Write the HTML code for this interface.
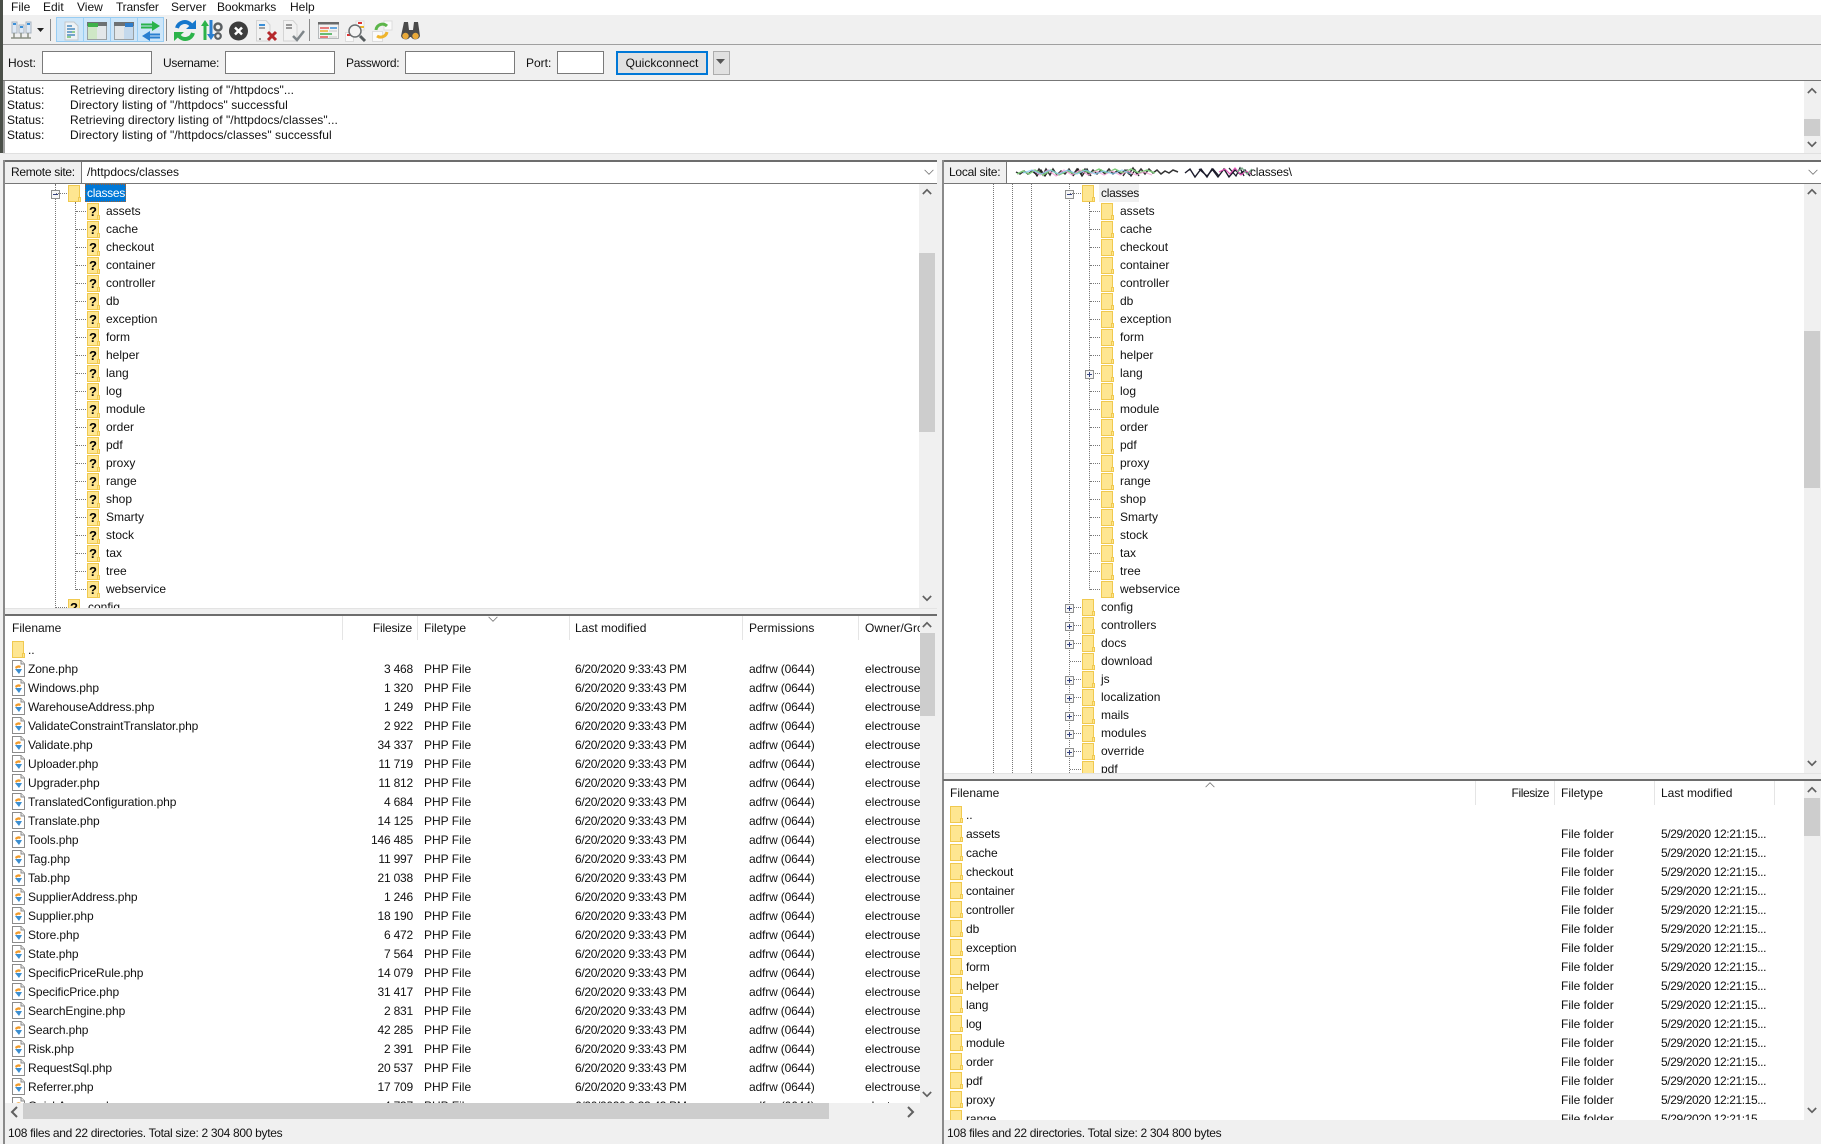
<!DOCTYPE html>
<html lang="en"><head><meta charset="utf-8"><title>FileZilla</title>
<style>
html,body{margin:0;padding:0;width:1821px;height:1144px;overflow:hidden;background:#f0f0f0}
body{position:relative;font:12px/18px "Liberation Sans",Arial,sans-serif;color:#111;filter:blur(.3px)}
.a{position:absolute}
.menu span{position:absolute;top:-2px}
.inp{position:absolute;top:51px;height:21px;background:#fff;border:1px solid #7a7a7a}
.lb{position:absolute;top:54px;letter-spacing:-.3px}
.w{position:absolute;background:#fff;overflow:hidden}
.vl{position:absolute;width:0;border-left:1px dotted #777}
.r{height:18px;position:relative;white-space:nowrap}
.r svg{position:absolute;top:1px;width:13px;height:17px}
.r span{position:absolute;top:0}
.r i{position:absolute;top:9px;height:0;border-top:1px dotted #777}
.r b{position:absolute;top:6px;width:9px;height:9px}
.L .c svg{left:82px}.L .c span{left:101px}.L .c i{left:71px;width:10px}
.L .t svg{left:63px}.L .t span{left:83px}.L .t i{left:51px;width:11px}.L .t b{left:46px}
.R .c svg{left:157px}.R .c span{left:176px}.R .c i{left:146px;width:10px}.R .c b{left:141px}
.R .t svg{left:138px}.R .t span{left:157px}.R .t i{left:126px;width:11px}.R .t b{left:121px}
table{border-collapse:collapse;table-layout:fixed;position:absolute;left:0}
td{padding:0 0 0 7px;height:19px;white-space:nowrap;overflow:hidden;line-height:19px}
td:first-child{letter-spacing:-.1px}
td.n{text-align:right;padding:0 4px 0 0;letter-spacing:-.2px}
.lt td:nth-child(4){letter-spacing:-.33px}
.lt td:nth-child(5){letter-spacing:-.15px}
.rt td:nth-child(4){letter-spacing:-.4px}
td svg{width:13px;height:17px;vertical-align:-4px;margin-right:3px;display:inline-block}
.hd{position:absolute;top:0;height:24px;line-height:24px}
.dv{position:absolute;top:0;width:1px;height:24px;background:#e5e5e5}
.sb{position:absolute;background:#f0f0f0}
.th{position:absolute;background:#cdcdcd}
.ch{position:absolute;width:10px;height:7px;margin-left:1px;fill:none;stroke:#606060;stroke-width:2}
.sm{position:absolute;width:12px;height:7px;fill:none;stroke:#777;stroke-width:1}
.st{letter-spacing:-.31px}
</style></head><body>
<svg width="0" height="0" style="position:absolute"><defs>
<symbol id="f" viewBox="0 0 13 17"><path d="M.5.5H11.5V16.5H.5Z" fill="#fee691" stroke="#f0c94f"/><path d="M10.500 12.500H12.500V16.500H10.500Z" fill="#fee691" stroke="#f0c94f"/></symbol>
<symbol id="q" viewBox="0 0 13 17"><path d="M.5.5H11.500V16.500H.5Z" fill="#fee691" stroke="#f0c94f"/><path d="M10.500 12.500H12.500V16.500H10.500Z" fill="#fee691" stroke="#f0c94f"/><text x="6" y="13" font-family="Liberation Sans" font-size="13" font-weight="700" text-anchor="middle" fill="#000">?</text></symbol>
<symbol id="d" viewBox="0 0 13 17"><path d="M.5.5H9L12.500 4V16.500H.5Z" fill="#fff" stroke="#8b8b8b"/><path d="M9 .5V4H12.500" fill="#e8e8e8" stroke="#8b8b8b"/><path d="M3 7Q6 4 9 6L8 8Q6 7 4 9Z" fill="#f09a2a"/><path d="M3 9H10L7 14Z" fill="#3b8ed0"/></symbol>
<symbol id="p" viewBox="0 0 9 9"><rect x=".5" y=".5" width="8" height="8" fill="#f6f6f6" stroke="#8e8f8f"/><path d="M2 4.500H7M4.500 2V7" stroke="#34427e"/></symbol>
<symbol id="m" viewBox="0 0 9 9"><rect x=".5" y=".5" width="8" height="8" fill="#f6f6f6" stroke="#8e8f8f"/><path d="M2 4.500H7" stroke="#34427e"/></symbol>
<symbol id="up" viewBox="0 0 12 8"><path d="M1 7L6 2L11 7"/></symbol>
<symbol id="dn" viewBox="0 0 12 8"><path d="M1 1L6 6L11 1"/></symbol>
</defs></svg>

<!-- menu -->
<div class="a menu" style="left:0;top:0;width:1821px;height:15px;background:#fff;overflow:hidden">
<span style="left:11px">File</span><span style="left:43px">Edit</span><span style="left:77px">View</span><span style="left:116px;letter-spacing:-.2px">Transfer</span><span style="left:171px">Server</span><span style="left:217px;letter-spacing:-.1px">Bookmarks</span><span style="left:290px">Help</span>
</div>
<div class="a" style="left:0;top:0;width:3px;height:153px;background:#4a4f48"></div>

<!-- toolbar -->
<svg class="a" style="left:3px;top:0" width="440" height="45" viewBox="3 0 440 45">
<g><rect x="12" y="22" width="5" height="11" fill="#dfe9f4" stroke="#a9b4c0"/><rect x="19" y="25" width="5" height="8" fill="#dfe9f4" stroke="#a9b4c0"/><rect x="26" y="22" width="5" height="11" fill="#dfe9f4" stroke="#a9b4c0"/><path d="M13 24h3M20 27h3M27 24h3" stroke="#3a8fd8" stroke-width="2"/><path d="M11 38H31M14 33V38M21 33V38M28 33V38" stroke="#8a8f84" stroke-width="1.500" fill="none"/></g>
<path d="M37 28H44L40.500 32Z" fill="#222"/>
<path d="M50.500 19V41" stroke="#8a8a8a"/>
<rect x="56.500" y="17.500" width="107" height="24" fill="#cde6f9" stroke="#99cdf3"/>
<path d="M83.500 18V41M110.500 18V41M137.500 18V41" stroke="#99cdf3"/>
<path d="M65 22H74L78 26V40H65Z" fill="#eef2f5" stroke="#c2c8cc"/><path d="M67 26H72M67 29H75M67 32H72M67 35H75" stroke="#4b8bbf" stroke-width="1.500"/><path d="M72 32h3M67 37h4" stroke="#6fbf6f" stroke-width="1.500"/>
<rect x="87.500" y="22.500" width="19" height="17" fill="#e3e7e9" stroke="#9aa0a2"/><rect x="87" y="22" width="20" height="4" fill="#6d7173"/><rect x="88" y="23" width="10" height="4" fill="#3fb14a"/><rect x="88" y="27" width="9" height="12" fill="#cfe7c6"/>
<rect x="114.500" y="22.500" width="19" height="17" fill="#e3e7e9" stroke="#9aa0a2"/><rect x="114" y="22" width="20" height="4" fill="#6d7173"/><rect x="125" y="23" width="8" height="4" fill="#2f7ecb"/><rect x="124" y="27" width="9" height="12" fill="#c4d9ec"/>
<path d="M141 24.500H155M141 27.500H155" stroke="#29b34b" stroke-width="2"/><path d="M152 21L160 26L152 31Z" fill="#29b34b"/><path d="M146 34.500H160M146 37.500H160" stroke="#2a7fd0" stroke-width="2"/><path d="M150 31L142 36L150 41Z" fill="#2a7fd0"/>
<path d="M166.500 19V41" stroke="#8a8a8a"/>
<path d="M177 28A8 8 0 0 1 191 25" fill="none" stroke="#1677cc" stroke-width="4"/><path d="M186 29H196V20Z" fill="#1677cc"/>
<path d="M193 33A8 8 0 0 1 179 36" fill="none" stroke="#2cb34a" stroke-width="4"/><path d="M184 32H174V41Z" fill="#2cb34a"/>
<path d="M205 22V40" stroke="#2cb34a" stroke-width="3"/><path d="M201 26L205 20L209 26Z" fill="#2cb34a"/><path d="M211 20V38" stroke="#2a7fd0" stroke-width="3"/><path d="M207 34L211 40L215 34Z" fill="#2a7fd0"/><circle cx="218" cy="27" r="3.500" fill="none" stroke="#5a5f62" stroke-width="2.500"/><circle cx="218" cy="36" r="2.800" fill="none" stroke="#5a5f62" stroke-width="2.200"/>
<circle cx="238.500" cy="31" r="9.500" fill="#3d3d3d"/><path d="M235 27.500L242 34.500M242 27.500L235 34.500" stroke="#fff" stroke-width="2.500"/>
<path d="M256.500 20.500H266L270 25V41H256.500Z" fill="#f2f2f2" stroke="#d4d4d4"/><path d="M259 25H265" stroke="#3a8fd8" stroke-width="2"/><path d="M259 28H265" stroke="#888" stroke-width="1.500"/><path d="M268 32L276 40M276 32L268 40" stroke="#b5282c" stroke-width="3"/><path d="M259 39h2" stroke="#333" stroke-width="1"/>
<path d="M283.500 20.500H293L297 25V41H283.500Z" fill="#f2f2f2" stroke="#d4d4d4"/><path d="M286 25H292M286 28H292" stroke="#777" stroke-width="1.500"/><path d="M293 36L297 40L304 31" stroke="#7f868a" stroke-width="2.500" fill="none"/>
<path d="M309.500 19V41" stroke="#8a8a8a"/>
<rect x="318.500" y="22.500" width="20" height="16" fill="#f3f3f3" stroke="#b5b9bb"/><rect x="318" y="22" width="21" height="2.500" fill="#6a6a6a"/><path d="M320 28H329" stroke="#e25555" stroke-width="1.500"/><path d="M320 31H328" stroke="#e9b52c" stroke-width="1.500"/><path d="M329 31H337M329 37H337" stroke="#d8d8d8" stroke-width="1.500"/><path d="M320 34H332" stroke="#37a84a" stroke-width="1.500"/><path d="M320 37H328" stroke="#e25555" stroke-width="1.500"/><path d="M330 28H337" stroke="#3a8fd8" stroke-width="1.500"/>
<rect x="345.500" y="32.500" width="8" height="9" fill="#fafafa" stroke="#ddd"/><rect x="356" y="21" width="8" height="9" fill="#fafafa" stroke="#ddd"/><path d="M347 35h4" stroke="#d33" stroke-width="2"/><path d="M358 23h4" stroke="#d33" stroke-width="2"/><path d="M360 27h4" stroke="#e9b52c" stroke-width="2"/><circle cx="355" cy="31" r="6" fill="#f4f4f4" stroke="#6a6f71" stroke-width="1.500"/><path d="M360 36L365 41" stroke="#565c5e" stroke-width="3"/>
<rect x="372.500" y="31.500" width="10" height="10" fill="#fafafa" stroke="#ddd"/><rect x="384" y="21" width="8" height="9" fill="#fafafa" stroke="#ddd"/><path d="M376 30A6.500 6.500 0 0 1 387 26" fill="none" stroke="#5cb54a" stroke-width="3"/><path d="M387 32A6.500 6.500 0 0 1 377 36" fill="none" stroke="#efb42c" stroke-width="3"/>
<path d="M404 22H408L409 30H413L414 22H418L420 36A5 5 0 0 1 411 37H410A5 5 0 0 1 401 36Z" fill="#4a4a4a"/><circle cx="405.500" cy="36" r="3.200" fill="#e8a93a"/><circle cx="415.500" cy="36" r="3.200" fill="#e8a93a"/>
</svg>
<div class="a" style="left:3px;top:44px;width:1818px;height:1px;background:#a0a0a0"></div>

<!-- quickconnect -->
<span class="lb" style="left:8px;letter-spacing:0">Host:</span><div class="inp" style="left:42px;width:108px"></div>
<span class="lb" style="left:163px">Username:</span><div class="inp" style="left:225px;width:108px"></div>
<span class="lb" style="left:346px">Password:</span><div class="inp" style="left:405px;width:108px"></div>
<span class="lb" style="left:526px;letter-spacing:0">Port:</span><div class="inp" style="left:557px;width:45px"></div>
<div class="a" style="left:616px;top:51px;width:88px;height:20px;line-height:20px;text-align:center;background:#e1e1e1;border:2px solid #0078d7">Quickconnect</div>
<div class="a" style="left:713px;top:51px;height:22px;background:#e1e1e1;border:1px solid #adadad;width:15px"></div>
<svg class="a" style="left:716px;top:59px" width="10" height="6"><path d="M0 0H9L4.500 5Z" fill="#555"/></svg>

<!-- log -->
<div class="a" style="left:3px;top:80px;width:1818px;height:1px;background:#777"></div>
<div class="w" style="left:5px;top:81px;width:1799px;height:72px">
<div class="a" style="left:2px;top:2px;line-height:15px;white-space:pre">Status:<br>Status:<br>Status:<br>Status:</div>
<div class="a" style="left:65px;top:2px;line-height:15px;white-space:pre;letter-spacing:.06px">Retrieving directory listing of "/httpdocs"...<br>Directory listing of "/httpdocs" successful<br>Retrieving directory listing of "/httpdocs/classes"...<br>Directory listing of "/httpdocs/classes" successful</div>
</div>
<div class="a" style="left:3px;top:81px;width:2px;height:72px;background:#a0a0a0"></div>
<div class="sb" style="left:1804px;top:81px;width:16px;height:72px"><div class="th" style="left:0;top:38px;width:16px;height:17px"></div></div>
<svg class="ch" style="left:1806px;top:87px"><use href="#up"/></svg><svg class="ch" style="left:1806px;top:141px"><use href="#dn"/></svg>
<div class="a" style="left:3px;top:153px;width:1818px;height:1px;background:#e0e0e0"></div>

<!-- remote site bar -->
<div class="a" style="left:3px;top:160px;width:934px;height:2px;background:#6d6d6d"></div>
<div class="a" style="left:3px;top:160px;width:2px;height:984px;background:#8a8a8a"></div>
<div class="a" style="left:5px;top:162px;width:932px;height:21px;background:#fff"></div>
<div class="a" style="left:5px;top:162px;width:76px;height:21px;background:#f0f0f0;border-right:1px solid #777;line-height:21px;text-indent:6px;letter-spacing:-.3px">Remote site:</div>
<div class="a" style="left:87px;top:162px;line-height:21px">/httpdocs/classes</div>
<svg class="sm" style="left:923px;top:169px"><use href="#dn"/></svg>
<div class="a" style="left:5px;top:183px;width:932px;height:1px;background:#777"></div>

<!-- remote tree -->
<div class="w L" style="left:5px;top:184px;width:914px;height:424px">
<div class="vl" style="left:50px;top:0;height:424px"></div>
<div class="vl" style="left:70px;top:18px;height:388px"></div>
<div class="r t"><b style="top:6px"><svg style="position:static;width:9px;height:9px;display:block"><use href="#m"/></svg></b><i></i><svg><use href="#f"/></svg><span style="left:80px;top:0;width:38px;height:16px;line-height:16px;padding-left:1px;background:#0078d7;color:#fff;border:1px dotted #a06030;letter-spacing:-.3px">classes</span></div>
<div class="r c"><i></i><svg><use href="#q"/></svg><span>assets</span></div>
<div class="r c"><i></i><svg><use href="#q"/></svg><span>cache</span></div>
<div class="r c"><i></i><svg><use href="#q"/></svg><span>checkout</span></div>
<div class="r c"><i></i><svg><use href="#q"/></svg><span>container</span></div>
<div class="r c"><i></i><svg><use href="#q"/></svg><span>controller</span></div>
<div class="r c"><i></i><svg><use href="#q"/></svg><span>db</span></div>
<div class="r c"><i></i><svg><use href="#q"/></svg><span>exception</span></div>
<div class="r c"><i></i><svg><use href="#q"/></svg><span>form</span></div>
<div class="r c"><i></i><svg><use href="#q"/></svg><span>helper</span></div>
<div class="r c"><i></i><svg><use href="#q"/></svg><span>lang</span></div>
<div class="r c"><i></i><svg><use href="#q"/></svg><span>log</span></div>
<div class="r c"><i></i><svg><use href="#q"/></svg><span>module</span></div>
<div class="r c"><i></i><svg><use href="#q"/></svg><span>order</span></div>
<div class="r c"><i></i><svg><use href="#q"/></svg><span>pdf</span></div>
<div class="r c"><i></i><svg><use href="#q"/></svg><span>proxy</span></div>
<div class="r c"><i></i><svg><use href="#q"/></svg><span>range</span></div>
<div class="r c"><i></i><svg><use href="#q"/></svg><span>shop</span></div>
<div class="r c"><i></i><svg><use href="#q"/></svg><span>Smarty</span></div>
<div class="r c"><i></i><svg><use href="#q"/></svg><span>stock</span></div>
<div class="r c"><i></i><svg><use href="#q"/></svg><span>tax</span></div>
<div class="r c"><i></i><svg><use href="#q"/></svg><span>tree</span></div>
<div class="r c"><i></i><svg><use href="#q"/></svg><span>webservice</span></div>
<div class="r t"><i></i><svg><use href="#q"/></svg><span>config</span></div>
</div>
<div class="sb" style="left:919px;top:184px;width:16px;height:424px"><div class="th" style="left:0;top:69px;width:16px;height:179px"></div></div>
<svg class="ch" style="left:921px;top:188px"><use href="#up"/></svg><svg class="ch" style="left:921px;top:595px"><use href="#dn"/></svg>
<div class="a" style="left:5px;top:608px;width:932px;height:1px;background:#e3e3e3"></div>

<!-- remote list -->
<div class="a" style="left:5px;top:614px;width:932px;height:2px;background:#6d6d6d"></div>
<div class="w" style="left:5px;top:616px;width:915px;height:487px">
<span class="hd" style="left:7px">Filename</span><div class="dv" style="left:337px"></div>
<span class="hd" style="right:508px;letter-spacing:-.2px">Filesize</span><div class="dv" style="left:412px"></div>
<span class="hd" style="left:419px">Filetype</span><div class="dv" style="left:564px"></div>
<span class="hd" style="left:570px">Last modified</span><div class="dv" style="left:737px"></div>
<span class="hd" style="left:744px">Permissions</span><div class="dv" style="left:853px"></div>
<span class="hd" style="left:860px">Owner/Group</span>
<svg class="sm" style="left:482px;top:0"><use href="#dn"/></svg>
<table class="lt" style="top:25px;width:915px"><colgroup><col style="width:337px"><col style="width:75px"><col style="width:151px"><col style="width:174px"><col style="width:116px"><col style="width:62px"></colgroup>
<tr><td><svg><use href="#f"/></svg>..</td><td></td><td></td><td></td><td></td><td></td></tr>
<tr><td><svg><use href="#d"/></svg>Zone.php</td><td class="n">3 468</td><td>PHP File</td><td>6/20/2020 9:33:43 PM</td><td>adfrw (0644)</td><td>electrouser</td></tr>
<tr><td><svg><use href="#d"/></svg>Windows.php</td><td class="n">1 320</td><td>PHP File</td><td>6/20/2020 9:33:43 PM</td><td>adfrw (0644)</td><td>electrouser</td></tr>
<tr><td><svg><use href="#d"/></svg>WarehouseAddress.php</td><td class="n">1 249</td><td>PHP File</td><td>6/20/2020 9:33:43 PM</td><td>adfrw (0644)</td><td>electrouser</td></tr>
<tr><td><svg><use href="#d"/></svg>ValidateConstraintTranslator.php</td><td class="n">2 922</td><td>PHP File</td><td>6/20/2020 9:33:43 PM</td><td>adfrw (0644)</td><td>electrouser</td></tr>
<tr><td><svg><use href="#d"/></svg>Validate.php</td><td class="n">34 337</td><td>PHP File</td><td>6/20/2020 9:33:43 PM</td><td>adfrw (0644)</td><td>electrouser</td></tr>
<tr><td><svg><use href="#d"/></svg>Uploader.php</td><td class="n">11 719</td><td>PHP File</td><td>6/20/2020 9:33:43 PM</td><td>adfrw (0644)</td><td>electrouser</td></tr>
<tr><td><svg><use href="#d"/></svg>Upgrader.php</td><td class="n">11 812</td><td>PHP File</td><td>6/20/2020 9:33:43 PM</td><td>adfrw (0644)</td><td>electrouser</td></tr>
<tr><td><svg><use href="#d"/></svg>TranslatedConfiguration.php</td><td class="n">4 684</td><td>PHP File</td><td>6/20/2020 9:33:43 PM</td><td>adfrw (0644)</td><td>electrouser</td></tr>
<tr><td><svg><use href="#d"/></svg>Translate.php</td><td class="n">14 125</td><td>PHP File</td><td>6/20/2020 9:33:43 PM</td><td>adfrw (0644)</td><td>electrouser</td></tr>
<tr><td><svg><use href="#d"/></svg>Tools.php</td><td class="n">146 485</td><td>PHP File</td><td>6/20/2020 9:33:43 PM</td><td>adfrw (0644)</td><td>electrouser</td></tr>
<tr><td><svg><use href="#d"/></svg>Tag.php</td><td class="n">11 997</td><td>PHP File</td><td>6/20/2020 9:33:43 PM</td><td>adfrw (0644)</td><td>electrouser</td></tr>
<tr><td><svg><use href="#d"/></svg>Tab.php</td><td class="n">21 038</td><td>PHP File</td><td>6/20/2020 9:33:43 PM</td><td>adfrw (0644)</td><td>electrouser</td></tr>
<tr><td><svg><use href="#d"/></svg>SupplierAddress.php</td><td class="n">1 246</td><td>PHP File</td><td>6/20/2020 9:33:43 PM</td><td>adfrw (0644)</td><td>electrouser</td></tr>
<tr><td><svg><use href="#d"/></svg>Supplier.php</td><td class="n">18 190</td><td>PHP File</td><td>6/20/2020 9:33:43 PM</td><td>adfrw (0644)</td><td>electrouser</td></tr>
<tr><td><svg><use href="#d"/></svg>Store.php</td><td class="n">6 472</td><td>PHP File</td><td>6/20/2020 9:33:43 PM</td><td>adfrw (0644)</td><td>electrouser</td></tr>
<tr><td><svg><use href="#d"/></svg>State.php</td><td class="n">7 564</td><td>PHP File</td><td>6/20/2020 9:33:43 PM</td><td>adfrw (0644)</td><td>electrouser</td></tr>
<tr><td><svg><use href="#d"/></svg>SpecificPriceRule.php</td><td class="n">14 079</td><td>PHP File</td><td>6/20/2020 9:33:43 PM</td><td>adfrw (0644)</td><td>electrouser</td></tr>
<tr><td><svg><use href="#d"/></svg>SpecificPrice.php</td><td class="n">31 417</td><td>PHP File</td><td>6/20/2020 9:33:43 PM</td><td>adfrw (0644)</td><td>electrouser</td></tr>
<tr><td><svg><use href="#d"/></svg>SearchEngine.php</td><td class="n">2 831</td><td>PHP File</td><td>6/20/2020 9:33:43 PM</td><td>adfrw (0644)</td><td>electrouser</td></tr>
<tr><td><svg><use href="#d"/></svg>Search.php</td><td class="n">42 285</td><td>PHP File</td><td>6/20/2020 9:33:43 PM</td><td>adfrw (0644)</td><td>electrouser</td></tr>
<tr><td><svg><use href="#d"/></svg>Risk.php</td><td class="n">2 391</td><td>PHP File</td><td>6/20/2020 9:33:43 PM</td><td>adfrw (0644)</td><td>electrouser</td></tr>
<tr><td><svg><use href="#d"/></svg>RequestSql.php</td><td class="n">20 537</td><td>PHP File</td><td>6/20/2020 9:33:43 PM</td><td>adfrw (0644)</td><td>electrouser</td></tr>
<tr><td><svg><use href="#d"/></svg>Referrer.php</td><td class="n">17 709</td><td>PHP File</td><td>6/20/2020 9:33:43 PM</td><td>adfrw (0644)</td><td>electrouser</td></tr>
<tr><td><svg><use href="#d"/></svg>QuickAccess.php</td><td class="n">4 737</td><td>PHP File</td><td>6/20/2020 9:33:43 PM</td><td>adfrw (0644)</td><td>electrouser</td></tr>
</table></div>
<div class="sb" style="left:920px;top:616px;width:15px;height:503px"><div class="th" style="left:0;top:17px;width:15px;height:83px"></div></div>
<svg class="ch" style="left:921px;top:621px"><use href="#up"/></svg><svg class="ch" style="left:921px;top:1091px"><use href="#dn"/></svg>
<div class="sb" style="left:5px;top:1103px;width:915px;height:16px"><div class="th" style="left:18px;top:0;width:806px;height:16px"></div></div>
<svg class="a" style="left:10px;top:1106px;fill:none;stroke:#606060;stroke-width:2" width="8" height="12"><path d="M7 1L2 6L7 11"/></svg>
<svg class="a" style="left:907px;top:1106px;fill:none;stroke:#606060;stroke-width:2" width="8" height="12"><path d="M1 1L6 6L1 11"/></svg>
<div class="a st" style="left:8px;top:1124px">108 files and 22 directories. Total size: 2 304 800 bytes</div>

<!-- local site bar -->
<div class="a" style="left:943px;top:160px;width:878px;height:2px;background:#6d6d6d"></div>
<div class="a" style="left:942px;top:160px;width:2px;height:984px;background:#8a8a8a"></div>
<div class="a" style="left:944px;top:162px;width:877px;height:21px;background:#fff"></div>
<div class="a" style="left:944px;top:162px;width:62px;height:21px;background:#f0f0f0;border-right:1px solid #777;line-height:21px;text-indent:5px;letter-spacing:-.25px">Local site:</div>
<svg class="a" style="left:1013px;top:164px" width="240" height="18" fill="none">
<path d="M3 8l4 2 4-3 4 3 4-3 4 3 3-5 4 6 3-6 4 6 3-6 4 6 4-4 4 3 4-5 4 6 4-6 4 5 4-5 4 6 4-5 4 4 4-4 4 4 4-5 4 5 4-3 4 3 4-4 4 4 4-6 4 6 4-5 4 5 4-5 4 4 4-3 4 4 4-3 4 2 4-3 5 2" stroke="#333" stroke-width="1.500"/>
<path d="M20 6l4 6 4-6 4 6 4-6M60 12l5-7 4 7 5-7 4 7M110 12l4-6 4 6 4-6 4 6" stroke="#222" stroke-width="1.300"/>
<path d="M4 10l6-3 6 3 6-4 8 5 8-5 8 5 8-4 8 3 8-4 8 3 8-4 8 4 8-4 8 4 8-4 8 4 8-3 8 3" stroke="#7ecb7a" stroke-width="1.400"/>
<path d="M20 6l7 5 8-5 8 6 8-6 8 5 8-5 8 5 8-4 8 4 8-4 8 4 8-4 8 4 8-3 8 3" stroke="#f59bd8" stroke-width="1.200" opacity=".8"/>
<path d="M10 9l9-3 9 4 9-4 9 4 9-4 9 4 9-4 9 4 9-3 9 3 9-4 9 4" stroke="#7fc8f0" stroke-width="1.200" opacity=".8"/>
<path d="M172 9l5-4 5 8 6-8 6 8 5-8 6 8 6-8 5 8 6-7 5 4 5-4 5 6" stroke="#1a1a2a" stroke-width="1.400"/>
<path d="M186 5l8 7 6-7 6 7M216 4l7 8 4-8 4 8" stroke="#1a1a2a" stroke-width="1.300"/>
<path d="M206 8l6-3 5 5 5-6 6 7 5-4 5 3" stroke="#e34fb4" stroke-width="1.100"/>
<path d="M224 8l5-4 5 6 5-5" stroke="#7a8" stroke-width="1.200"/>
</svg>
<div class="a" style="left:1250px;top:162px;line-height:21px;letter-spacing:-.2px">classes\</div>
<svg class="sm" style="left:1807px;top:169px"><use href="#dn"/></svg>
<div class="a" style="left:944px;top:183px;width:877px;height:1px;background:#777"></div>

<!-- local tree -->
<div class="w R" style="left:944px;top:184px;width:860px;height:589px">
<div class="vl" style="left:49px;top:0;height:589px"></div>
<div class="vl" style="left:68px;top:0;height:589px"></div>
<div class="vl" style="left:87px;top:0;height:589px"></div>
<div class="vl" style="left:125px;top:0;height:589px"></div>
<div class="vl" style="left:145px;top:18px;height:388px"></div>
<div class="r t"><b><svg style="position:static;width:9px;height:9px;display:block"><use href="#m"/></svg></b><i></i><svg><use href="#f"/></svg><span style="left:155px;width:38px;padding-left:2px;background:#f0f0f0;letter-spacing:-.3px">classes</span></div>
<div class="r c"><i></i><svg><use href="#f"/></svg><span>assets</span></div>
<div class="r c"><i></i><svg><use href="#f"/></svg><span>cache</span></div>
<div class="r c"><i></i><svg><use href="#f"/></svg><span>checkout</span></div>
<div class="r c"><i></i><svg><use href="#f"/></svg><span>container</span></div>
<div class="r c"><i></i><svg><use href="#f"/></svg><span>controller</span></div>
<div class="r c"><i></i><svg><use href="#f"/></svg><span>db</span></div>
<div class="r c"><i></i><svg><use href="#f"/></svg><span>exception</span></div>
<div class="r c"><i></i><svg><use href="#f"/></svg><span>form</span></div>
<div class="r c"><i></i><svg><use href="#f"/></svg><span>helper</span></div>
<div class="r c"><i></i><b><svg style="position:static;width:9px;height:9px;display:block"><use href="#p"/></svg></b><svg><use href="#f"/></svg><span>lang</span></div>
<div class="r c"><i></i><svg><use href="#f"/></svg><span>log</span></div>
<div class="r c"><i></i><svg><use href="#f"/></svg><span>module</span></div>
<div class="r c"><i></i><svg><use href="#f"/></svg><span>order</span></div>
<div class="r c"><i></i><svg><use href="#f"/></svg><span>pdf</span></div>
<div class="r c"><i></i><svg><use href="#f"/></svg><span>proxy</span></div>
<div class="r c"><i></i><svg><use href="#f"/></svg><span>range</span></div>
<div class="r c"><i></i><svg><use href="#f"/></svg><span>shop</span></div>
<div class="r c"><i></i><svg><use href="#f"/></svg><span>Smarty</span></div>
<div class="r c"><i></i><svg><use href="#f"/></svg><span>stock</span></div>
<div class="r c"><i></i><svg><use href="#f"/></svg><span>tax</span></div>
<div class="r c"><i></i><svg><use href="#f"/></svg><span>tree</span></div>
<div class="r c"><i></i><svg><use href="#f"/></svg><span>webservice</span></div>
<div class="r t"><i></i><b><svg style="position:static;width:9px;height:9px;display:block"><use href="#p"/></svg></b><svg><use href="#f"/></svg><span>config</span></div>
<div class="r t"><i></i><b><svg style="position:static;width:9px;height:9px;display:block"><use href="#p"/></svg></b><svg><use href="#f"/></svg><span>controllers</span></div>
<div class="r t"><i></i><b><svg style="position:static;width:9px;height:9px;display:block"><use href="#p"/></svg></b><svg><use href="#f"/></svg><span>docs</span></div>
<div class="r t"><i></i><svg><use href="#f"/></svg><span>download</span></div>
<div class="r t"><i></i><b><svg style="position:static;width:9px;height:9px;display:block"><use href="#p"/></svg></b><svg><use href="#f"/></svg><span>js</span></div>
<div class="r t"><i></i><b><svg style="position:static;width:9px;height:9px;display:block"><use href="#p"/></svg></b><svg><use href="#f"/></svg><span>localization</span></div>
<div class="r t"><i></i><b><svg style="position:static;width:9px;height:9px;display:block"><use href="#p"/></svg></b><svg><use href="#f"/></svg><span>mails</span></div>
<div class="r t"><i></i><b><svg style="position:static;width:9px;height:9px;display:block"><use href="#p"/></svg></b><svg><use href="#f"/></svg><span>modules</span></div>
<div class="r t"><i></i><b><svg style="position:static;width:9px;height:9px;display:block"><use href="#p"/></svg></b><svg><use href="#f"/></svg><span>override</span></div>
<div class="r t"><i></i><svg><use href="#f"/></svg><span>pdf</span></div>
</div>
<div class="sb" style="left:1804px;top:184px;width:16px;height:589px"><div class="th" style="left:0;top:147px;width:16px;height:157px"></div></div>
<svg class="ch" style="left:1806px;top:188px"><use href="#up"/></svg><svg class="ch" style="left:1806px;top:760px"><use href="#dn"/></svg>
<div class="a" style="left:944px;top:773px;width:877px;height:1px;background:#e3e3e3"></div>

<!-- local list -->
<div class="a" style="left:943px;top:779px;width:878px;height:2px;background:#6d6d6d"></div>
<div class="w" style="left:944px;top:781px;width:860px;height:339px">
<span class="hd" style="left:6px">Filename</span><div class="dv" style="left:531px"></div>
<span class="hd" style="right:255px;letter-spacing:-.4px">Filesize</span><div class="dv" style="left:610px"></div>
<span class="hd" style="left:617px">Filetype</span><div class="dv" style="left:710px"></div>
<span class="hd" style="left:717px">Last modified</span><div class="dv" style="left:830px"></div>
<svg class="sm" style="left:260px;top:0"><use href="#up"/></svg>
<table class="rt" style="top:25px;width:860px"><colgroup><col style="width:531px"><col style="width:79px"><col style="width:100px"><col style="width:120px"><col style="width:30px"></colgroup>
<tr><td style="padding-left:6px"><svg><use href="#f"/></svg>..</td><td></td><td></td><td></td><td></td></tr>
<tr><td style="padding-left:6px"><svg><use href="#f"/></svg>assets</td><td></td><td>File folder</td><td>5/29/2020 12:21:15...</td><td></td></tr>
<tr><td style="padding-left:6px"><svg><use href="#f"/></svg>cache</td><td></td><td>File folder</td><td>5/29/2020 12:21:15...</td><td></td></tr>
<tr><td style="padding-left:6px"><svg><use href="#f"/></svg>checkout</td><td></td><td>File folder</td><td>5/29/2020 12:21:15...</td><td></td></tr>
<tr><td style="padding-left:6px"><svg><use href="#f"/></svg>container</td><td></td><td>File folder</td><td>5/29/2020 12:21:15...</td><td></td></tr>
<tr><td style="padding-left:6px"><svg><use href="#f"/></svg>controller</td><td></td><td>File folder</td><td>5/29/2020 12:21:15...</td><td></td></tr>
<tr><td style="padding-left:6px"><svg><use href="#f"/></svg>db</td><td></td><td>File folder</td><td>5/29/2020 12:21:15...</td><td></td></tr>
<tr><td style="padding-left:6px"><svg><use href="#f"/></svg>exception</td><td></td><td>File folder</td><td>5/29/2020 12:21:15...</td><td></td></tr>
<tr><td style="padding-left:6px"><svg><use href="#f"/></svg>form</td><td></td><td>File folder</td><td>5/29/2020 12:21:15...</td><td></td></tr>
<tr><td style="padding-left:6px"><svg><use href="#f"/></svg>helper</td><td></td><td>File folder</td><td>5/29/2020 12:21:15...</td><td></td></tr>
<tr><td style="padding-left:6px"><svg><use href="#f"/></svg>lang</td><td></td><td>File folder</td><td>5/29/2020 12:21:15...</td><td></td></tr>
<tr><td style="padding-left:6px"><svg><use href="#f"/></svg>log</td><td></td><td>File folder</td><td>5/29/2020 12:21:15...</td><td></td></tr>
<tr><td style="padding-left:6px"><svg><use href="#f"/></svg>module</td><td></td><td>File folder</td><td>5/29/2020 12:21:15...</td><td></td></tr>
<tr><td style="padding-left:6px"><svg><use href="#f"/></svg>order</td><td></td><td>File folder</td><td>5/29/2020 12:21:15...</td><td></td></tr>
<tr><td style="padding-left:6px"><svg><use href="#f"/></svg>pdf</td><td></td><td>File folder</td><td>5/29/2020 12:21:15...</td><td></td></tr>
<tr><td style="padding-left:6px"><svg><use href="#f"/></svg>proxy</td><td></td><td>File folder</td><td>5/29/2020 12:21:15...</td><td></td></tr>
<tr><td style="padding-left:6px"><svg><use href="#f"/></svg>range</td><td></td><td>File folder</td><td>5/29/2020 12:21:15...</td><td></td></tr>
</table></div>
<div class="sb" style="left:1804px;top:781px;width:16px;height:339px"><div class="th" style="left:0;top:17px;width:16px;height:38px"></div></div>
<svg class="ch" style="left:1806px;top:786px"><use href="#up"/></svg><svg class="ch" style="left:1806px;top:1107px"><use href="#dn"/></svg>
<div class="a st" style="left:947px;top:1124px">108 files and 22 directories. Total size: 2 304 800 bytes</div>
</body></html>
